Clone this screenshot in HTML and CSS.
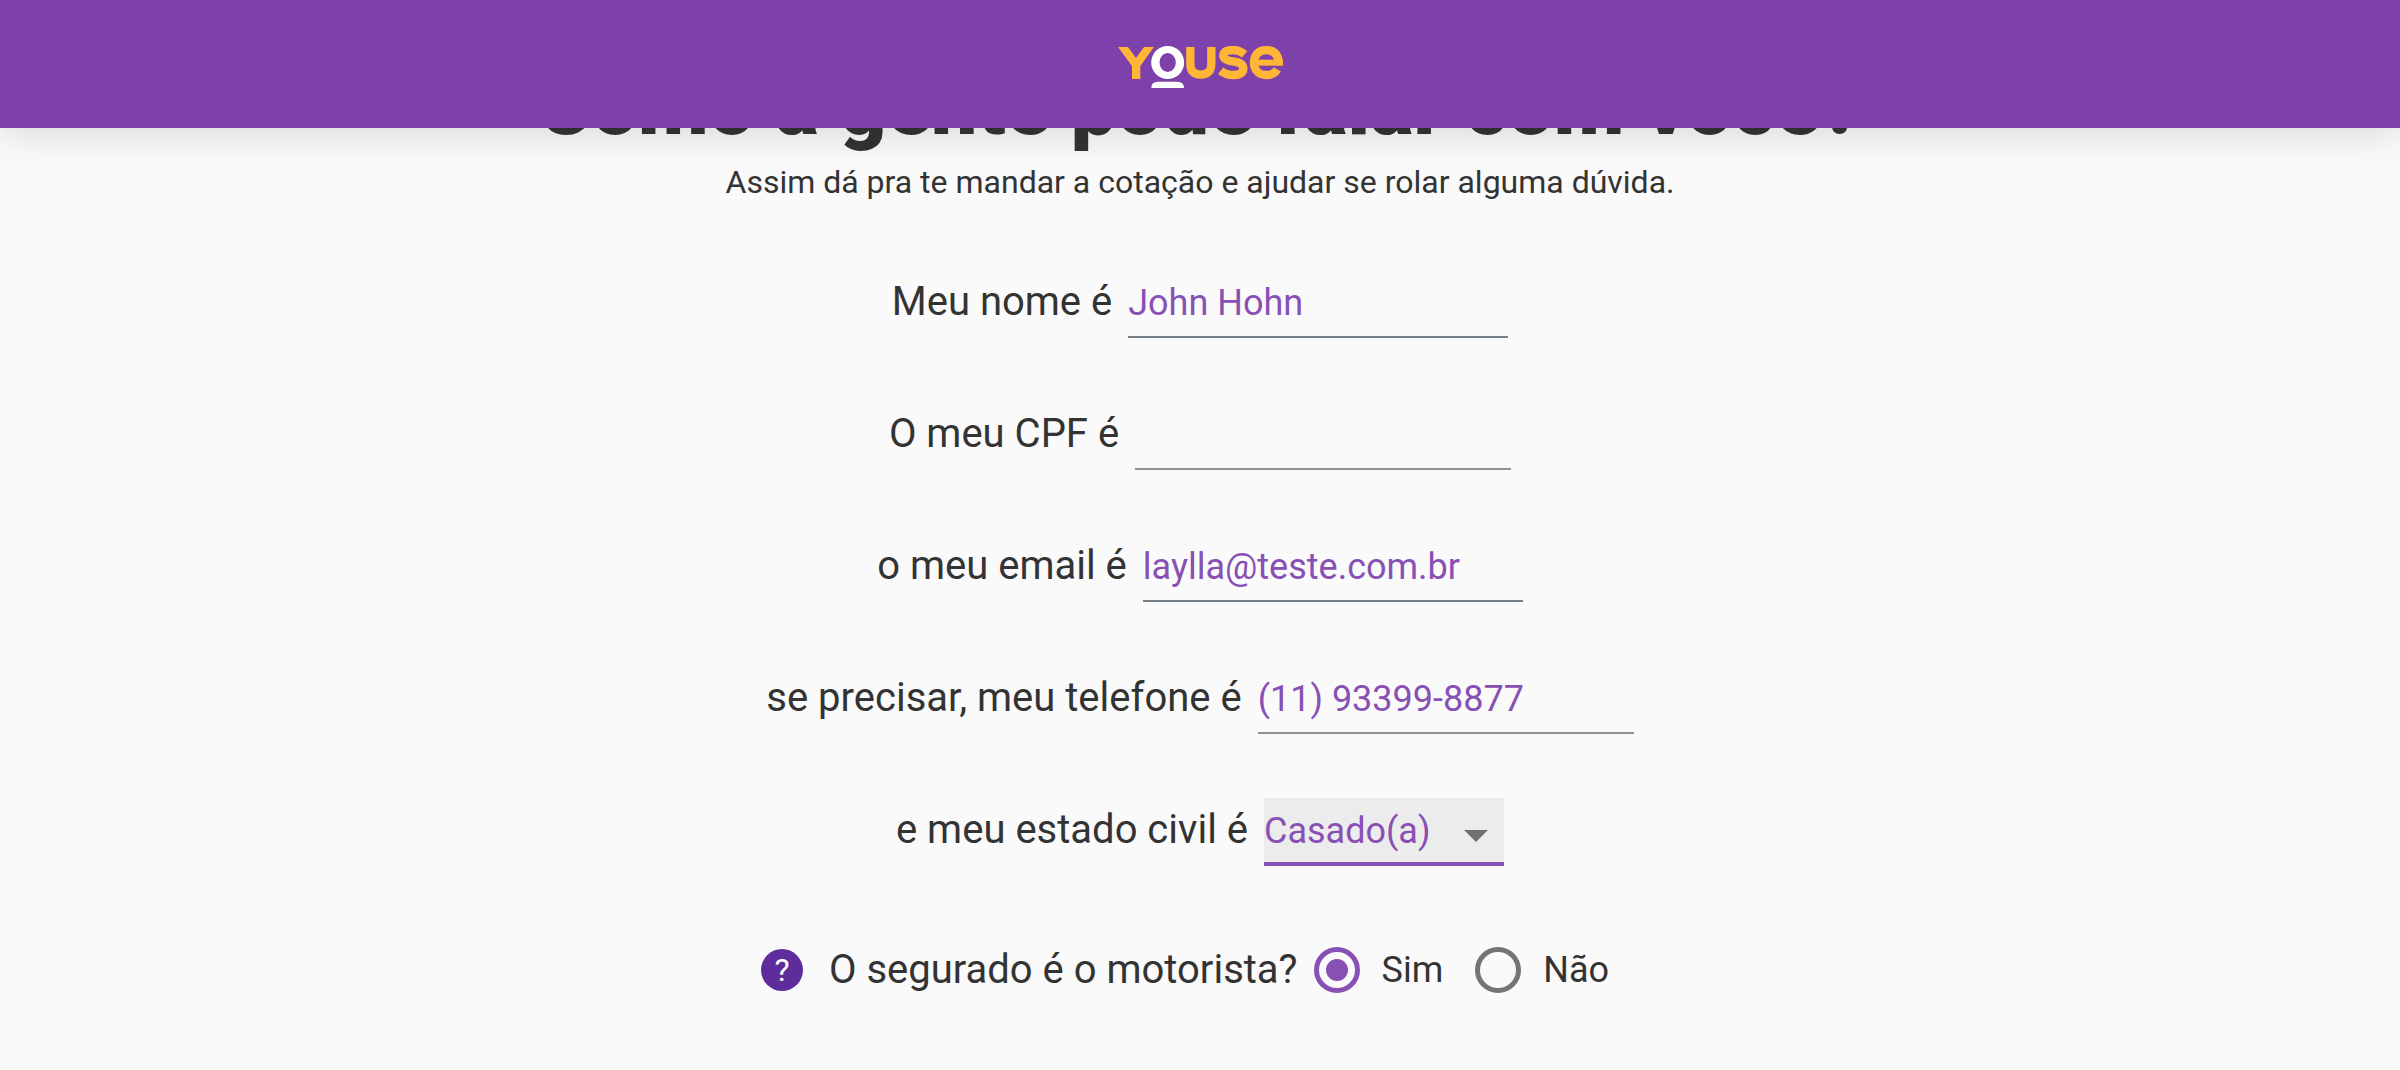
FILE: index.html
```html
<!DOCTYPE html>
<html lang="pt-BR">
<head>
<meta charset="utf-8">
<meta name="viewport" content="width=device-width, initial-scale=1">
<title>Youse</title>
<link rel="stylesheet" href="styles.css">
</head>
<body>
<header class="topbar">
  <a class="brand" href="#" aria-label="Youse">
    <svg class="logo" viewBox="54 48 495 126" fill="none">
      <path fill="#ffb636" d="M54 51H84L108 84 132 51H162L121 108V147H96V108Z"/>
      <path fill="#fff" fill-rule="evenodd" d="M203 48a49 49 0 0 1 0 99a49 49 0 0 1 0-99ZM203 69a24 28 0 0 0 0 57a24 28 0 0 0 0-57ZM154 174Q154 155 174 155H232Q252 155 252 174Z"/>
      <g stroke="#ffb636" stroke-width="25">
        <path d="M271 51V101Q271 134 302 134Q334 134 334 101V51"/>
        <path stroke-width="25" d="M434 73Q418 60 399 60Q370 60 370 77Q370 90 399 94Q430 98 430 115Q430 135 400 135Q378 135 362 122"/>
        <path stroke-width="25" d="M532 118C525 130 513 135 500 135C476 135 462 120 462 98C462 75 476 60 500 60C524 60 537 76 537 106"/>
        <path stroke-width="18" d="M461 98H549"/>
      </g>
    </svg>
  </a>
</header>
<main class="page">
  <h1 class="title">Como a gente pode falar com você?</h1>
  <p class="subtitle">Assim dá pra te mandar a cotação e ajudar se rolar alguma dúvida.</p>
  <form class="form">
    <div class="row">
      <label for="nome">Meu nome é</label>
      <input class="field filled" id="nome" type="text" value="John Hohn">
    </div>
    <div class="row">
      <label for="cpf">O meu CPF é</label>
      <input class="field" id="cpf" type="text">
    </div>
    <div class="row">
      <label for="email">o meu email é</label>
      <input class="field filled" id="email" type="email" value="laylla@teste.com.br">
    </div>
    <div class="row">
      <label for="telefone">se precisar, meu telefone é</label>
      <input class="field" id="telefone" type="tel" value="(11) 93399-8877">
    </div>
    <div class="row">
      <label for="civil">e meu estado civil é</label>
      <span class="select">
        <select class="picker" id="civil">
          <option>Casado(a)</option>
        </select>
        <svg class="caret" viewBox="0 0 24 12"><path d="M0 0H24L12 12Z" fill="#707070"/></svg>
      </span>
    </div>
    <div class="row driver" role="radiogroup" aria-labelledby="driver-label">
      <button class="help" type="button" aria-label="Ajuda">?</button>
      <span id="driver-label">O segurado é o motorista?</span>
      <label class="choice"><input class="radio" type="radio" name="motorista" checked>Sim</label>
      <label class="choice"><input class="radio" type="radio" name="motorista">Não</label>
    </div>
  </form>
</main>
</body>
</html>
```
FILE: styles.css
```css
* { box-sizing: border-box; }

body {
  margin: 0;
  background: #fafafa;
  color: #333;
  font-family: Roboto, sans-serif;
  font-size: 40px;
}

.topbar {
  position: fixed;
  top: 0;
  left: 0;
  right: 0;
  z-index: 2;
  height: 128px;
  display: flex;
  justify-content: center;
  padding-top: 46px;
  background: #7e41ab;
  box-shadow: 0 4px 40px rgba(0, 0, 0, 0.15);
}

.brand { height: 42px; }

.logo {
  display: block;
  width: 165px;
  height: 42px;
}

.page {
  padding: 62px 24px 32px;
  text-align: center;
}

.title {
  margin: 0;
  font-size: 82px;
  line-height: 88px;
  font-weight: 900;
}

.subtitle {
  margin: 8px 0 0;
  font-size: 32px;
  line-height: 48px;
}

.form {
  display: flex;
  flex-direction: column;
  gap: 64px;
  margin-top: 64px;
}

.row {
  display: flex;
  align-items: baseline;
  justify-content: center;
  gap: 16px;
  height: 68px;
  line-height: 48px;
}

.field,
.picker {
  width: 376px;
  height: 68px;
  padding: 0;
  border: 0;
  border-bottom: 2px solid #919191;
  border-radius: 0;
  outline: 0;
  background: transparent;
  color: #8850b5;
  font: 36px Roboto, sans-serif;
}

.filled {
  width: 380px;
  border-bottom-color: #75808a;
}

.select {
  position: relative;
}

.picker {
  display: block;
  width: 240px;
  padding-top: 2px;
  border-bottom: 4px solid #8850b5;
  background: #ececec;
  appearance: none;
}

.caret {
  position: absolute;
  right: 16px;
  top: 32px;
  width: 24px;
  height: 12px;
  pointer-events: none;
}

.driver {
  align-items: center;
  padding-right: 14px;
  margin-top: 6px;
}

.help {
  width: 42px;
  height: 42px;
  margin-right: 10px;
  padding: 0;
  border: 0;
  border-radius: 50%;
  background: #5f2c9c;
  color: #fff;
  font: 32px/42px Roboto, sans-serif;
}

.choice {
  display: flex;
  align-items: center;
  gap: 22px;
  margin-right: 16px;
  font-size: 36px;
}

.radio {
  display: grid;
  place-items: center;
  width: 46px;
  height: 46px;
  margin: 0;
  border: 5px solid #757575;
  border-radius: 50%;
  appearance: none;
}

.radio:checked { border-color: #8850b5; }

.radio:checked::before {
  content: "";
  width: 22px;
  height: 22px;
  border-radius: 50%;
  background: #8850b5;
}
```
